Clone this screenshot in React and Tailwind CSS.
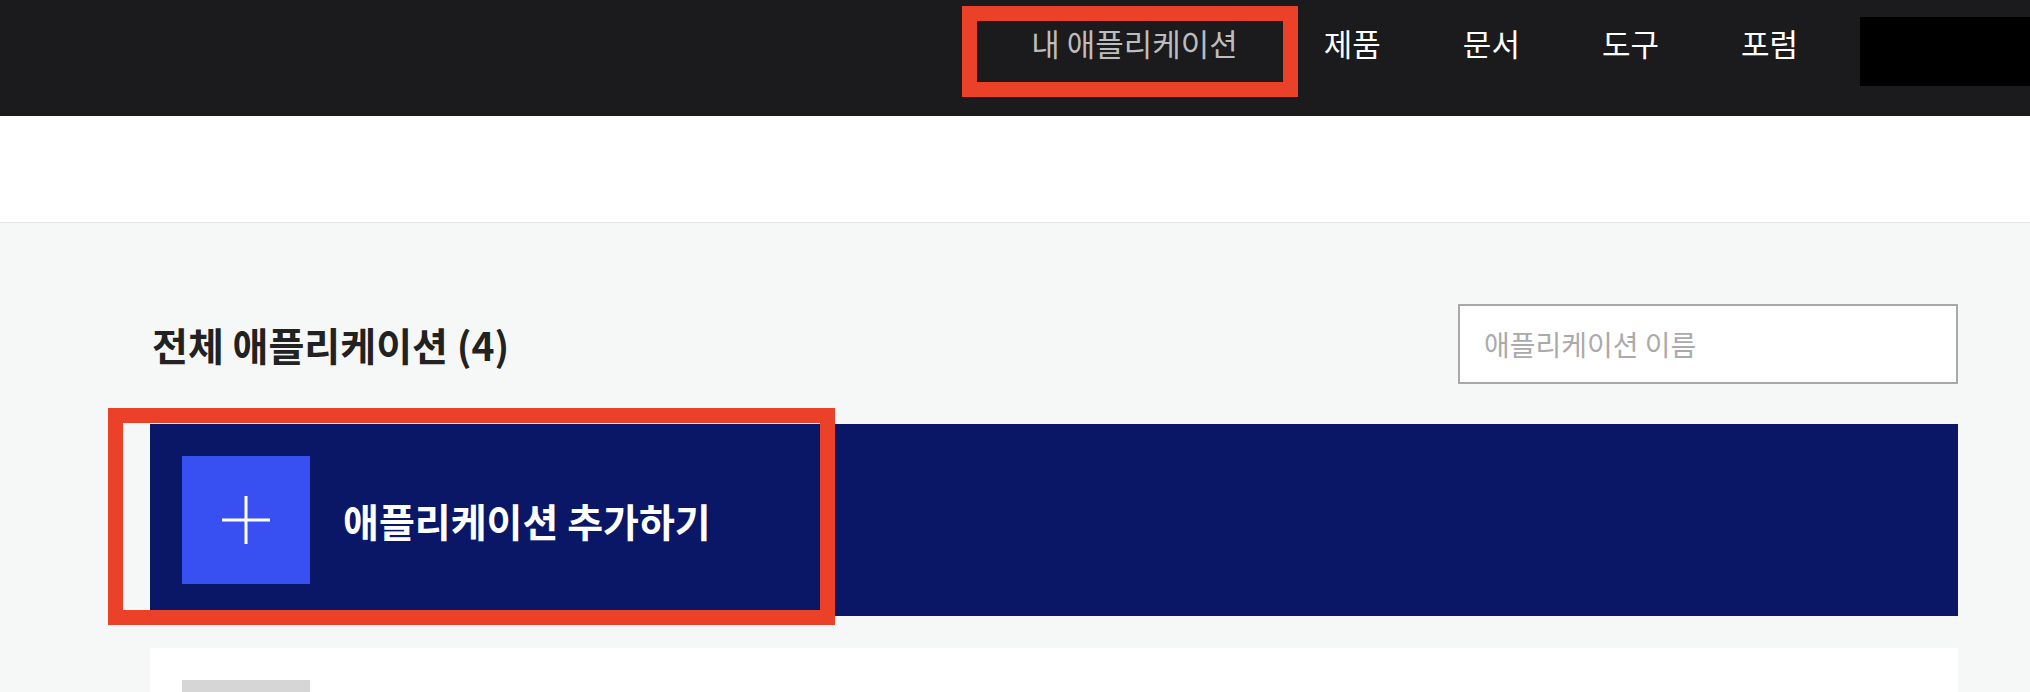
import React from 'react';

const navItems = ['제품', '문서', '도구', '포럼'];

export default function App() {
    return (
        <div className="min-h-screen bg-[#f6f8f7] font-['Noto_Sans_CJK_KR','Noto_Sans',sans-serif] overflow-hidden">
            {/* Top bar */}
            <header className="h-[116px] bg-[#1b1b1d] flex justify-end items-start">
                <nav className="flex items-start pt-[27px] gap-[82px] text-[31px] leading-[31px] text-white">
                    <div className="relative pr-[4px] text-[#bdbdbd]">
                        내 애플리케이션
                        <div className="absolute -left-[69px] -top-[21px] w-[336px] h-[91px] border-[15px] border-[#ea4128]"></div>
                    </div>
                    {navItems.map((item) => (
                        <a key={item} className="text-white">{item}</a>
                    ))}
                </nav>
                <div className="ml-[62px] mt-[17px] w-[170px] h-[69px] bg-black"></div>
            </header>

            {/* Sub header */}
            <div className="h-[107px] bg-white border-b border-[#e5e5e5]"></div>

            {/* Content */}
            <main className="pl-[150px] pr-[72px] pt-[81px]">
                <div className="flex items-center justify-between h-[80px]">
                    <h1 className="ml-[2px] text-[39px] font-bold text-[#222222] leading-none">전체 애플리케이션 (4)</h1>
                    <input
                        className="w-[500px] h-[80px] border-2 border-[#aaaaaa] bg-white px-[24px] text-[28px] text-[#333] placeholder:text-[#aaaaaa] focus:outline-none"
                        placeholder="애플리케이션 이름"
                    />
                </div>

                <div className="relative mt-[40px] h-[192px] bg-[#0a1767] p-[32px] flex items-center gap-[33px]">
                    <div className="w-[128px] h-[128px] bg-[#3850f2] flex items-center justify-center">
                        <svg width="48" height="48" viewBox="0 0 48 48" fill="none" stroke="white" strokeWidth="3">
                            <line x1="24" y1="0" x2="24" y2="48" />
                            <line x1="0" y1="24" x2="48" y2="24" />
                        </svg>
                    </div>
                    <span className="text-[39px] font-bold text-white leading-none">애플리케이션 추가하기</span>
                    <div className="absolute -left-[42px] -top-[16px] w-[727px] h-[217px] border-[15px] border-[#ea4128]"></div>
                </div>

                <div className="mt-[32px] h-[200px] bg-white p-[32px]">
                    <div className="w-[128px] h-[128px] bg-[#d6d6d6]"></div>
                </div>
            </main>
        </div>
    );
}
